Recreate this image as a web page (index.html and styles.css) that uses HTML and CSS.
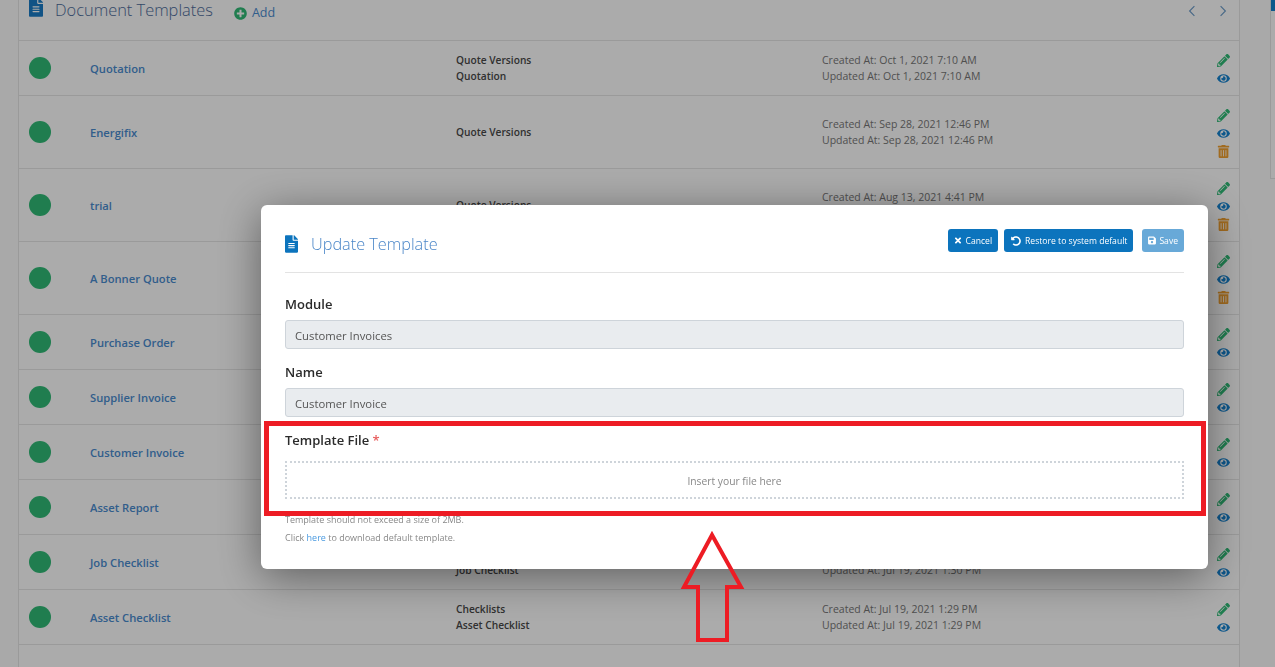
FILE: index.html
```html
<!DOCTYPE html>
<html>
<head>
    <meta charset="UTF-8">
    <meta name="viewport" content="width=device-width, initial-scale=1.0">
    <title>Document Templates</title>
    <link rel="stylesheet" href="styles.css">
</head>
<body>
    <svg class="icon-defs" xmlns="http://www.w3.org/2000/svg">
        <symbol id="i-file" viewBox="0 0 384 512"><path d="M224 136V0H24C10.7 0 0 10.7 0 24v464c0 13.3 10.7 24 24 24h336c13.3 0 24-10.7 24-24V160H248c-13.2 0-24-10.8-24-24zm64 236c0 6.6-5.4 12-12 12H108c-6.6 0-12-5.4-12-12v-8c0-6.6 5.4-12 12-12h168c6.6 0 12 5.4 12 12v8zm0-64c0 6.6-5.4 12-12 12H108c-6.6 0-12-5.4-12-12v-8c0-6.6 5.4-12 12-12h168c6.6 0 12 5.4 12 12v8zm0-72v8c0 6.6-5.4 12-12 12H108c-6.6 0-12-5.4-12-12v-8c0-6.6 5.4-12 12-12h168c6.6 0 12 5.4 12 12zm96-114.1v6.1H256V0h6.1c6.4 0 12.5 2.5 17 7l97.9 98c4.5 4.5 7 10.6 7 16.9z"/></symbol>
        <symbol id="i-plus" viewBox="0 0 512 512"><path d="M256 8C119 8 8 119 8 256s111 248 248 248 248-111 248-248S393 8 256 8zm144 276c0 6.6-5.4 12-12 12h-92v92c0 6.6-5.4 12-12 12h-56c-6.6 0-12-5.4-12-12v-92h-92c-6.6 0-12-5.4-12-12v-56c0-6.6 5.4-12 12-12h92v-92c0-6.6 5.4-12 12-12h56c6.6 0 12 5.4 12 12v92h92c6.6 0 12 5.4 12 12v56z"/></symbol>
        <symbol id="i-pencil" viewBox="0 0 512 512"><path d="M497.9 142.1l-46.1 46.1c-4.7 4.7-12.3 4.7-17 0l-111-111c-4.7-4.7-4.7-12.3 0-17l46.1-46.1c18.7-18.7 49.1-18.7 67.9 0l60.1 60.1c18.8 18.7 18.8 49.1 0 67.9zM284.2 99.8L21.6 362.4.4 483.9c-2.9 16.4 11.4 30.6 27.8 27.8l121.5-21.3 262.6-262.6c4.7-4.7 4.7-12.3 0-17l-111-111c-4.8-4.7-12.4-4.7-17.1 0zM124.1 339.9c-5.5-5.5-5.5-14.3 0-19.8l154-154c5.5-5.5 14.3-5.5 19.8 0s5.5 14.3 0 19.8l-154 154c-5.5 5.5-14.3 5.5-19.8 0zM88 424h48v36.3l-64.5 11.3-31.1-31.1L51.7 376H88v48z"/></symbol>
        <symbol id="i-eye" viewBox="0 0 576 512"><path d="M572.52 241.4C518.29 135.59 410.93 64 288 64S57.68 135.64 3.48 241.41a32.35 32.35 0 0 0 0 29.19C57.71 376.41 165.07 448 288 448s230.32-71.64 284.52-177.41a32.35 32.35 0 0 0 0-29.19zM288 400a144 144 0 1 1 144-144 143.93 143.93 0 0 1-144 144zm0-240a95.31 95.31 0 0 0-25.31 3.79 47.85 47.85 0 0 1-66.9 66.9A95.78 95.78 0 1 0 288 160z"/></symbol>
        <symbol id="i-trash" viewBox="0 0 448 512"><path d="M32 464a48 48 0 0 0 48 48h288a48 48 0 0 0 48-48V128H32zm272-256a16 16 0 0 1 32 0v224a16 16 0 0 1-32 0zm-96 0a16 16 0 0 1 32 0v224a16 16 0 0 1-32 0zm-96 0a16 16 0 0 1 32 0v224a16 16 0 0 1-32 0zM432 32H312l-9.4-18.7A24 24 0 0 0 281.1 0H166.8a23.72 23.72 0 0 0-21.4 13.3L136 32H16A16 16 0 0 0 0 48v32a16 16 0 0 0 16 16h416a16 16 0 0 0 16-16V48a16 16 0 0 0-16-16z"/></symbol>
        <symbol id="i-times" viewBox="0 0 352 512"><path d="M242.72 256l100.07-100.07c12.28-12.28 12.28-32.19 0-44.48l-22.24-22.24c-12.28-12.28-32.19-12.28-44.48 0L176 189.28 75.93 89.21c-12.28-12.28-32.19-12.28-44.48 0L9.21 111.45c-12.28 12.28-12.28 32.19 0 44.48L109.28 256 9.21 356.07c-12.28 12.28-12.28 32.19 0 44.48l22.24 22.24c12.28 12.28 32.2 12.28 44.48 0L176 322.72l100.07 100.07c12.28 12.28 32.2 12.28 44.48 0l22.24-22.24c12.28-12.28 12.28-32.19 0-44.48L242.72 256z"/></symbol>
        <symbol id="i-undo" viewBox="0 0 512 512"><path d="M255.545 8c-66.269.119-126.438 26.233-170.86 68.685L48.971 40.971C33.851 25.851 8 36.559 8 57.941V192c0 13.255 10.745 24 24 24h134.059c21.382 0 32.09-25.851 16.971-40.971l-41.75-41.75c30.864-28.899 70.801-44.907 113.23-45.273 92.398-.798 170.283 73.977 169.484 169.442C423.236 348.009 349.816 424 256 424c-41.127 0-79.997-14.678-110.63-41.556-4.743-4.161-11.906-3.908-16.368.553L89.34 422.659c-4.872 4.872-4.631 12.815.482 17.433C133.798 479.813 192.074 504 256 504c136.966 0 247.999-111.033 248-247.998C504.001 119.193 392.354 7.755 255.545 8z"/></symbol>
        <symbol id="i-save" viewBox="0 0 448 512"><path d="M433.941 129.941l-83.882-83.882A48 48 0 0 0 316.118 32H48C21.49 32 0 53.49 0 80v352c0 26.51 21.49 48 48 48h352c26.51 0 48-21.49 48-48V163.882a48 48 0 0 0-14.059-33.941zM224 416c-35.346 0-64-28.654-64-64 0-35.346 28.654-64 64-64s64 28.654 64 64c0 35.346-28.654 64-64 64zm96-304.52V212c0 6.627-5.373 12-12 12H76c-6.627 0-12-5.373-12-12V108c0-6.627 5.373-12 12-12h228.52c3.183 0 6.235 1.264 8.485 3.515l3.48 3.48A11.996 11.996 0 0 1 320 111.48z"/></symbol>
    </svg>

    <main class="card">
        <div class="card-head">
            <svg class="head-icon"><use href="#i-file"/></svg>
            <span class="head-title">Document Templates</span>
            <a class="head-add"><svg class="add-icon"><use href="#i-plus"/></svg>Add</a>
            <div class="pager">
                <svg class="chevron" viewBox="0 0 10 14"><path d="M8 1L2 7l6 6"/></svg>
                <svg class="chevron" viewBox="0 0 10 14"><path d="M2 1l6 6-6 6"/></svg>
            </div>
        </div>

        <div class="row">
            <span class="dot"></span><a class="name">Quotation</a>
            <div class="module">Quote Versions<br>Quotation</div>
            <div class="dates">Created At: Oct 1, 2021 7:10 AM<br>Updated At: Oct 1, 2021 7:10 AM</div>
            <div class="actions"><svg class="act edit"><use href="#i-pencil"/></svg><svg class="act view"><use href="#i-eye"/></svg></div>
        </div>
        <div class="row">
            <span class="dot"></span><a class="name">Energifix</a>
            <div class="module">Quote Versions</div>
            <div class="dates">Created At: Sep 28, 2021 12:46 PM<br>Updated At: Sep 28, 2021 12:46 PM</div>
            <div class="actions"><svg class="act edit"><use href="#i-pencil"/></svg><svg class="act view"><use href="#i-eye"/></svg><svg class="act del"><use href="#i-trash"/></svg></div>
        </div>
        <div class="row">
            <span class="dot"></span><a class="name">trial</a>
            <div class="module">Quote Versions</div>
            <div class="dates">Created At: Aug 13, 2021 4:41 PM<br>Updated At: Aug 13, 2021 4:41 PM</div>
            <div class="actions"><svg class="act edit"><use href="#i-pencil"/></svg><svg class="act view"><use href="#i-eye"/></svg><svg class="act del"><use href="#i-trash"/></svg></div>
        </div>
        <div class="row">
            <span class="dot"></span><a class="name">A Bonner Quote</a>
            <div class="actions"><svg class="act edit"><use href="#i-pencil"/></svg><svg class="act view"><use href="#i-eye"/></svg><svg class="act del"><use href="#i-trash"/></svg></div>
        </div>
        <div class="row">
            <span class="dot"></span><a class="name">Purchase Order</a>
            <div class="actions"><svg class="act edit"><use href="#i-pencil"/></svg><svg class="act view"><use href="#i-eye"/></svg></div>
        </div>
        <div class="row">
            <span class="dot"></span><a class="name">Supplier Invoice</a>
            <div class="actions"><svg class="act edit"><use href="#i-pencil"/></svg><svg class="act view"><use href="#i-eye"/></svg></div>
        </div>
        <div class="row">
            <span class="dot"></span><a class="name">Customer Invoice</a>
            <div class="actions"><svg class="act edit"><use href="#i-pencil"/></svg><svg class="act view"><use href="#i-eye"/></svg></div>
        </div>
        <div class="row">
            <span class="dot"></span><a class="name">Asset Report</a>
            <div class="actions"><svg class="act edit"><use href="#i-pencil"/></svg><svg class="act view"><use href="#i-eye"/></svg></div>
        </div>
        <div class="row">
            <span class="dot"></span><a class="name">Job Checklist</a>
            <div class="module">Checklists<br>Job Checklist</div>
            <div class="dates">Created At: Jul 19, 2021 1:30 PM<br>Updated At: Jul 19, 2021 1:30 PM</div>
            <div class="actions"><svg class="act edit"><use href="#i-pencil"/></svg><svg class="act view"><use href="#i-eye"/></svg></div>
        </div>
        <div class="row">
            <span class="dot"></span><a class="name">Asset Checklist</a>
            <div class="module">Checklists<br>Asset Checklist</div>
            <div class="dates">Created At: Jul 19, 2021 1:29 PM<br>Updated At: Jul 19, 2021 1:29 PM</div>
            <div class="actions"><svg class="act edit"><use href="#i-pencil"/></svg><svg class="act view"><use href="#i-eye"/></svg></div>
        </div>
        <div class="row row-empty"></div>
    </main>

    <aside class="side-panel"><div class="side-bar"></div></aside>

    <div class="overlay"></div>

    <div class="modal">
        <div class="modal-head">
            <div class="modal-title"><svg class="modal-icon"><use href="#i-file"/></svg>Update Template</div>
            <div class="modal-btns">
                <button class="btn"><svg class="btn-icon"><use href="#i-times"/></svg>Cancel</button>
                <button class="btn"><svg class="btn-icon wide"><use href="#i-undo"/></svg>Restore to system default</button>
                <button class="btn btn-save"><svg class="btn-icon"><use href="#i-save"/></svg>Save</button>
            </div>
        </div>
        <label class="field-label first">Module</label>
        <input class="field-input" type="text" value="Customer Invoices" disabled>
        <label class="field-label">Name</label>
        <input class="field-input" type="text" value="Customer Invoice" disabled>
        <label class="field-label file-label">Template File <span class="req">*</span></label>
        <div class="dropzone">Insert your file here</div>
        <p class="hint hint-first">Template should not exceed a size of 2MB.</p>
        <p class="hint">Click <a class="hint-link">here</a> to download default template.</p>
    </div>

    <div class="mark-box"></div>
    <svg class="mark-arrow" viewBox="0 0 66 112"><path d="M32 5L4 57h14v53h29V57h14z"/></svg>
</body>
</html>
```

FILE: styles.css
```css
html, body {
    height: 100%;
}
body {
    font-family: "Open Sans", "Noto Sans", sans-serif;
    background-color: #fdfdfd;
    color: #333;
    display: flex;
    margin: 0;
    padding-left: 18px;
    overflow: hidden;
    box-sizing: border-box;
}
.icon-defs {
    display: none;
}

/* list behind the dialog */
.card {
    width: 1222px;
    box-sizing: border-box;
    flex: none;
    background: #fff;
    border-left: 1px solid #e6e6e6;
    border-right: 1px solid #e6e6e6;
}
.card-head {
    height: 40px;
    display: flex;
    align-items: flex-start;
    padding-left: 10px;
    padding-right: 12px;
}
.head-icon {
    width: 14px;
    height: 19px;
    margin-top: -2px;
    fill: #1a7dc6;
}
.head-title {
    font-size: 16.4px;
    font-weight: 300;
    line-height: 20px;
    margin-left: 12px;
    color: #4d6c9c;
}
.head-add {
    display: flex;
    align-items: center;
    font-size: 12.5px;
    line-height: 18px;
    margin-left: 21px;
    margin-top: 4px;
    color: #4a8cd0;
}
.add-icon {
    width: 13px;
    height: 13px;
    margin-right: 5px;
    fill: #30bb77;
}
.pager {
    margin-left: auto;
    display: flex;
    gap: 23px;
    margin-top: 5px;
}
.chevron {
    width: 8px;
    height: 12px;
    fill: none;
    stroke: #6a9bc9;
    stroke-width: 1.4;
}
.row {
    display: grid;
    grid-template-columns: 61px 366px 366px 1fr 30px;
    align-items: center;
    box-sizing: border-box;
    padding-left: 10px;
    padding-right: 1px;
    border-top: 1px solid #e6e6e6;
}
.row-empty {
    height: 30px;
}
.dot {
    width: 22px;
    height: 22px;
    border-radius: 50%;
    background: #30bb77;
}
.name {
    grid-column: 2;
    padding-top: 1px;
    font-size: 11.2px;
    font-weight: 600;
    color: #4a8cd0;
}
.module {
    grid-column: 3;
    font-size: 10.2px;
    font-weight: 600;
    line-height: 16px;
    color: #484848;
}
.dates {
    grid-column: 4;
    font-size: 10.5px;
    line-height: 16px;
    color: #777;
}
.actions {
    grid-column: 5;
    display: flex;
    flex-direction: column;
    align-items: center;
    gap: 5px;
    padding: 13px 0 10px;
}
.act {
    width: 13px;
    height: 13px;
    display: block;
}
.edit { fill: #30bb77; }
.view { fill: #1583d0; }
.del { fill: #f0a030; }

.side-panel {
    flex: none;
    width: 5px;
    height: 179px;
    margin-left: 30px;
    box-sizing: border-box;
    border-left: 1px solid #e6e6e6;
    border-bottom: 1px solid #e6e6e6;
    background: #fff;
}
.side-bar {
    height: 11px;
    background: #1583d0;
}

.overlay {
    position: fixed;
    inset: 0;
    background: rgba(0, 0, 0, 0.33);
}

/* dialog */
.modal {
    position: fixed;
    left: 261px;
    top: 205px;
    width: 947px;
    box-sizing: border-box;
    padding: 24px;
    background: #fff;
    border-radius: 6px;
    box-shadow: 0 8px 44px rgba(0, 0, 0, 0.45);
}
.modal-head {
    height: 43px;
    display: flex;
    justify-content: space-between;
    border-bottom: 1px solid #e3e3e3;
}
.modal-title {
    display: flex;
    align-items: center;
    height: 29px;
    font-size: 16.3px;
    font-weight: 300;
    color: #4a86c8;
}
.modal-icon {
    width: 13px;
    height: 18px;
    margin-right: 13px;
    fill: #0c74bd;
}
.modal-btns {
    display: flex;
    align-items: flex-start;
}
.btn {
    height: 23px;
    display: flex;
    align-items: center;
    padding: 0 6px;
    margin-left: 6px;
    border: none;
    border-radius: 3px;
    background: #0c74bd;
    color: #fff;
    font-family: inherit;
    font-size: 8.6px;
    white-space: nowrap;
}
.btn-save {
    margin-left: 9px;
    background: #68a9d8;
}
.btn-icon {
    width: 8px;
    height: 9px;
    margin-right: 3px;
    fill: #fff;
}
.btn-icon.wide {
    width: 10px;
    height: 10px;
    margin-left: 1px;
    margin-right: 4px;
}
.field-label {
    display: block;
    font-size: 13px;
    font-weight: 600;
    line-height: 20px;
    color: #2b2b2b;
    margin: 13px 0 6px;
}
.field-label.first {
    margin-top: 21px;
}
.field-label.file-label {
    margin-bottom: 11px;
}
.req {
    color: #e86060;
}
.field-input {
    display: block;
    width: 100%;
    height: 29px;
    box-sizing: border-box;
    padding: 2px 9px 0;
    border: 1px solid #ced4da;
    border-radius: 3px;
    background: #e9ecef;
    color: #555;
    font-family: inherit;
    font-size: 11.3px;
}
.dropzone {
    height: 38px;
    display: flex;
    align-items: center;
    justify-content: center;
    box-sizing: border-box;
    padding-top: 1px;
    border: 2px dotted #ced4da;
    font-size: 10.3px;
    color: #888;
}
.hint {
    margin: 2px 0 0;
    padding-top: 1px;
    font-size: 9px;
    line-height: 15px;
    color: #888;
}
.hint-first {
    margin-top: 12px;
}
.hint-link {
    color: #4a9ae0;
}

/* annotation drawn over the screenshot */
.mark-box {
    position: fixed;
    left: 264px;
    top: 421px;
    width: 942px;
    height: 95px;
    box-sizing: border-box;
    border: 5px solid #ed1c24;
}
.mark-arrow {
    position: fixed;
    left: 680px;
    top: 530px;
    width: 66px;
    height: 112px;
    fill: none;
    stroke: #ed1c24;
    stroke-width: 4;
}
```
